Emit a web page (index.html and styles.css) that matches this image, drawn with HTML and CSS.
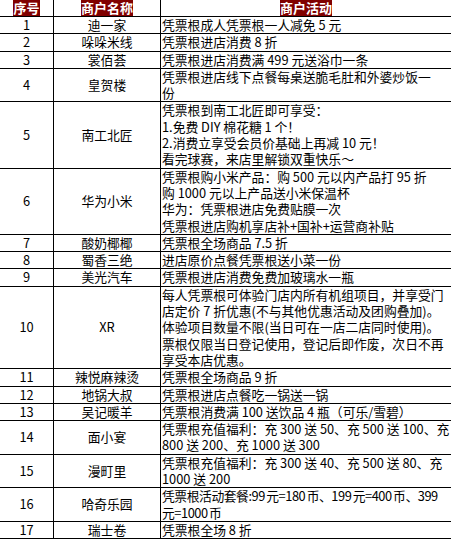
FILE: index.html
```html
<!DOCTYPE html>
<html lang="zh-CN">
<head>
<meta charset="utf-8">
<title>商户活动</title>
<link rel="stylesheet" href="styles.css">
</head>
<body>
<table class="deals">
  <colgroup><col class="c-no"><col class="c-name"><col class="c-act"></colgroup>
  <thead>
    <tr><th class="no"><span class="hl">序号</span></th><th class="name"><span class="hl">商户名称</span></th><th class="act-h"><span class="hl">商户活动</span></th></tr>
  </thead>
  <tbody>
    <tr><td class="no">1</td><td class="name">迪一家</td><td class="act">凭票根成人凭票根一人减免 5 元</td></tr>
    <tr><td class="no">2</td><td class="name">哚哚米线</td><td class="act">凭票根进店消费 8 折</td></tr>
    <tr><td class="no">3</td><td class="name">裳佰荟</td><td class="act">凭票根进店消费满 499 元送浴巾一条</td></tr>
    <tr><td class="no">4</td><td class="name">皇贺楼</td><td class="act">凭票根进店线下点餐每桌送脆毛肚和外婆炒饭一<br>份</td></tr>
    <tr><td class="no">5</td><td class="name">南工北匠</td><td class="act">凭票根到南工北匠即可享受：<br>1.免费 DIY 棉花糖 1 个！<br>2.消费立享受会员价基础上再减 10 元！<br>看完球赛，来店里解锁双重快乐～</td></tr>
    <tr><td class="no">6</td><td class="name">华为小米</td><td class="act">凭票根购小米产品：购 500 元以内产品打 95 折<br>购 1000 元以上产品送小米保温杯<br>华为：凭票根进店免费贴膜一次<br>凭票根进店购机享店补+国补+运营商补贴</td></tr>
    <tr><td class="no">7</td><td class="name">酸奶椰椰</td><td class="act">凭票根全场商品 7.5 折</td></tr>
    <tr><td class="no">8</td><td class="name">蜀香三绝</td><td class="act">进店原价点餐凭票根送小菜一份</td></tr>
    <tr><td class="no">9</td><td class="name">美光汽车</td><td class="act">凭票根进店消费免费加玻璃水一瓶</td></tr>
    <tr><td class="no">10</td><td class="name">XR</td><td class="act">每人凭票根可体验门店内所有机组项目，并享受门<br>店定价 7 折优惠(不与其他优惠活动及团购叠加)。<br>体验项目数量不限(当日可在一店二店同时使用)。<br>票根仅限当日登记使用，登记后即作废，次日不再<br>享受本店优惠。</td></tr>
    <tr><td class="no">11</td><td class="name">辣悦麻辣烫</td><td class="act">凭票根全场商品 9 折</td></tr>
    <tr><td class="no">12</td><td class="name">地锅大叔</td><td class="act">凭票根进店点餐吃一锅送一锅</td></tr>
    <tr><td class="no">13</td><td class="name">吴记暖羊</td><td class="act">凭票根消费满 100 送饮品 4 瓶（可乐/雪碧）</td></tr>
    <tr><td class="no">14</td><td class="name">面小宴</td><td class="act">凭票根充值福利：充 300 送 50、充 500 送 100、充<br>800 送 200、充 1000 送 300</td></tr>
    <tr><td class="no">15</td><td class="name">漫町里</td><td class="act">凭票根充值福利：充 300 送 40、充 500 送 80、充<br>1000 送 200</td></tr>
    <tr><td class="no">16</td><td class="name">哈奇乐园</td><td class="act tight">凭票根活动套餐:99 元=180 币、199 元=400 币、399<br>元=1000 币</td></tr>
    <tr><td class="no">17</td><td class="name">瑞士卷</td><td class="act">凭票根全场 8 折</td></tr>
  </tbody>
</table>
</body>
</html>
```
FILE: styles.css
```css
html, body {
  margin: 0;
  padding: 0;
  background: #fff;
}
body {
  font-family: "Noto Sans CJK SC", "Noto Sans", sans-serif;
  color: #000;
  overflow: hidden;
}
.deals {
  border-collapse: separate;
  border-spacing: 0;
  table-layout: fixed;
  width: 451px;
}
.c-no { width: 54px; }
.c-name { width: 107px; }
.c-act { width: 290px; }

.deals th,
.deals td {
  padding: 0;
  border-bottom: 1px solid #000;
  vertical-align: middle;
  font-size: 12.8px;
  line-height: 16.3px;
  font-weight: normal;
}
.deals th {
  height: 16px;
  line-height: 16px;
  vertical-align: top;
  text-align: center;
}
.deals .no,
.deals .name {
  border-right: 1px solid #000;
  text-align: center;
}
.deals .act {
  text-align: left;
  padding-left: 1px;
  white-space: nowrap;
  overflow: hidden;
}
.deals .tight {
  letter-spacing: -0.45px;
  word-spacing: -1px;
}
.hl {
  display: inline-block;
  background: #800000;
  color: #fff;
  font-weight: bold;
  font-size: 13px;
  line-height: 16px;
  height: 16px;
  vertical-align: top;
}
```
